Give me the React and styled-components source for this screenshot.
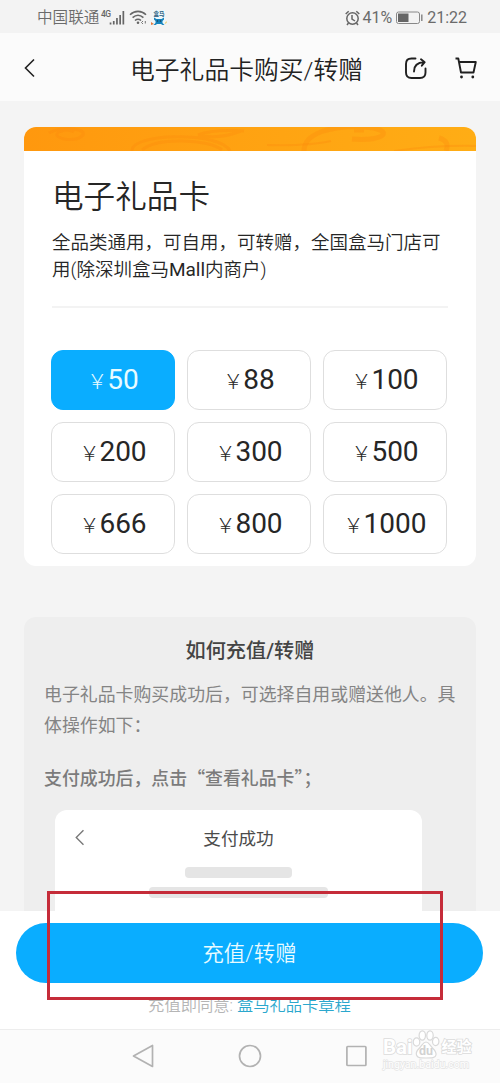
import React from 'react';
import styled, { createGlobalStyle } from 'styled-components';

const Global = createGlobalStyle`
  * { box-sizing: border-box; }
  body { margin: 0; background: #f4f4f4; font-family: Roboto, "Noto Sans CJK SC", sans-serif; color: #262626; }
  h1, h2, h3, p { margin: 0; font-weight: 350; }
  button { font: inherit; color: inherit; }
  svg { display: block; flex: none; }
`;

const Screen = styled.div`
  position: relative;
  width: 500px;
  height: 1083px;
  display: flex;
  flex-direction: column;
  overflow: hidden;
  background: #f4f4f4;
`;

const StatusBar = styled.div`
  height: 33px;
  flex: none;
  display: flex;
  justify-content: space-between;
  align-items: center;
  padding: 2px 33px 0 37px;
  color: #6b6b6b;
  font-size: 16px;
  background: #f3f3f3;
`;

const StatusGroup = styled.div`
  display: flex;
  align-items: center;
  gap: ${(p) => p.$gap}px;
`;

const Carrier = styled.span`
  height: 24px;
  font-size: 15.6px;
  line-height: 24px;
  font-weight: 350;
  white-space: nowrap;
`;

const Header = styled.header`
  height: 68px;
  flex: none;
  display: flex;
  align-items: center;
  padding: 2px 23px 0 23px;
  background: #fbfbfb;
`;

const HeaderTitle = styled.h1`
  flex: 1;
  padding: 5px 0 0 92px;
  font-size: 24.8px;
  line-height: 36px;
  color: #222;
  white-space: nowrap;
`;

const HeaderActions = styled.div`
  display: flex;
  gap: 28px;
`;

const Content = styled.main`
  flex: 1;
  min-height: 0;
  overflow: hidden;
  padding: 26px 24px 0;
`;

const Card = styled.section`
  height: 439px;
  border-radius: 12px;
  overflow: hidden;
  background: #fff;
`;

const Banner = styled.div`
  height: 24px;
  overflow: hidden;
  background: linear-gradient(90deg, #ff980e, #ffad15);
`;

const CardBody = styled.div`
  padding: 24px 28px 0;
`;

const CardTitle = styled.h2`
  font-size: 31.6px;
  line-height: 46px;
  white-space: nowrap;
`;

const Description = styled.p`
  margin-top: 9px;
  padding-bottom: 23px;
  border-bottom: 2px solid #f3f3f3;
  font-size: 18.5px;
  line-height: 26.5px;
  white-space: nowrap;
`;

const Latin = styled.span`
  font-size: 19px;
  font-weight: 400;
`;

const Amounts = styled.div`
  margin: 42px 0 0 -1px;
  display: grid;
  grid-template-columns: repeat(3, 124px);
  column-gap: 12px;
  row-gap: 12px;
`;

const Amount = styled.button`
  height: 60px;
  padding: 0;
  display: flex;
  justify-content: center;
  align-items: baseline;
  border: 1px solid ${(p) => (p.$active ? '#0aadff' : '#dedede')};
  border-radius: 12px;
  background: ${(p) => (p.$active ? '#0aadff' : '#fff')};
  color: ${(p) => (p.$active ? '#e9fbff' : '#262626')};
  font-size: 28px;
  line-height: 58px;
`;

const Yen = styled.span`
  font-family: "Noto Sans CJK SC", sans-serif;
  font-size: 20px;
  font-weight: 300;
`;

const Guide = styled.section`
  margin-top: 51px;
  height: 420px;
  padding: 17px 20px 0;
  border-radius: 12px;
  background: #eee;
`;

const GuideTitle = styled.h2`
  font-size: 20.2px;
  line-height: 34px;
  font-weight: 500;
  text-align: center;
  color: #444;
`;

const GuideText = styled.p`
  margin-top: ${(p) => p.$top}px;
  font-family: "Noto Sans CJK SC", sans-serif;
  font-size: 17.9px;
  line-height: 31px;
  font-weight: ${(p) => (p.$strong ? 500 : 400)};
  color: ${(p) => (p.$strong ? '#7b7b7b' : '#848484')};
  white-space: nowrap;
`;

const Preview = styled.div`
  margin: 17px 0 0 11px;
  width: 367px;
  height: 160px;
  border-radius: 12px;
  background: #fff;
`;

const PreviewHeader = styled.div`
  height: 57px;
  display: grid;
  grid-template-columns: 20px 1fr 20px;
  align-items: center;
  padding: 0 19px 2px;
  font-size: 17.6px;
  color: #4b4b4b;
  text-align: center;
`;

const Placeholder = styled.div`
  width: ${(p) => p.$width}px;
  height: 11px;
  margin: 0 auto 9px;
  border-radius: 4px;
  background: #e5e5e5;
`;

const Footer = styled.footer`
  height: 118px;
  flex: none;
  padding: 12px 17px 0 16px;
  background: #fff;
  text-align: center;
`;

const PayButton = styled.button`
  width: 100%;
  height: 60px;
  display: block;
  padding: 0 0 3px;
  border: 0;
  border-radius: 30px;
  background: #0aadff;
  color: #e9fbff;
  font-size: 21.4px;
  font-weight: 350;
`;

const Terms = styled.p`
  margin-top: 11px;
  font-size: 16.3px;
  line-height: 24px;
  color: #b5b5b5;
  white-space: nowrap;
`;

const TermsLink = styled.span`
  color: #2ba7cd;
`;

const SystemNav = styled.nav`
  position: relative;
  height: 54px;
  flex: none;
  display: flex;
  align-items: center;
  padding: 0 0 2px 132px;
  gap: 84px;
  border-top: 1px solid #ededed;
  background: #fbfbfb;
`;

const Highlight = styled.div`
  position: absolute;
  left: 47px;
  top: 891px;
  width: 396px;
  height: 109px;
  border: 3px solid #c52c39;
`;

const Watermark = styled.div`
  position: absolute;
  left: 383px;
  top: 0;
  width: 90px;
  color: #fff;
`;

const Brand = styled.div`
  height: 29px;
  display: flex;
  align-items: flex-end;
  font-size: 20.5px;
  font-weight: 700;
  line-height: 23px;
`;

const BrandName = styled.span`
  margin-left: ${(p) => p.$gap || 0}px;
  font-size: ${(p) => p.$size || 20.5}px;
  -webkit-text-stroke: 1.6px #dcdcdc;
  paint-order: stroke fill;
`;

const Site = styled.div`
  font-size: 10.6px;
  line-height: 12px;
  white-space: nowrap;
  -webkit-text-stroke: 1.3px #e4e4e4;
  paint-order: stroke fill;
`;

const Paw = () => (
  <svg width="28" height="29" viewBox="0 0 28 29" fill="#fff" stroke="#d9d9d9" strokeWidth="1.200">
    <ellipse cx="4.500" cy="12" rx="3.300" ry="4.200" />
    <ellipse cx="10.300" cy="5.500" rx="3.200" ry="4.700" />
    <ellipse cx="18" cy="5.500" rx="3.200" ry="4.700" />
    <ellipse cx="23.700" cy="11.500" rx="3.200" ry="4.200" />
    <path d="M14 12c-3 0-4 3.500-6.500 6-2.500 2.400-4 4-3 7s3.500 3 9.500 3 9.500 0 10-3-1-4.600-3.500-7C18 15.500 17 12 14 12Z" />
    <text x="14" y="25" textAnchor="middle" fontFamily="Roboto" fontWeight="700" fontSize="12.500" stroke="none" fill="#d2d2d2">du</text>
  </svg>
);

const Signal = () => (
  <svg width="27" height="18" viewBox="0 0 27 18" fill="#666">
    <text x="2" y="8" fontFamily="Roboto" fontWeight="500" fontSize="8.500" letterSpacing="-.5">4G</text>
    <path d="M10.700 13.500h1.700v2h-1.700zM13.900 12h1.700v3.500h-1.700zM17.100 9h1.700v6.500h-1.700zM20.300 6h1.700v9.500h-1.700zM23.500 2h1.700v13.500h-1.700z" />
  </svg>
);

const Wifi = () => (
  <svg width="18" height="16" viewBox="0 0 18 16" fill="none" stroke="#666" strokeWidth="1.600">
    <path d="M1 4.800C5.700.2 12.300.2 17 4.800M3.600 7.700c3.300-3 7.500-3 10.800 0M6 10.500c2-1.700 4-1.700 6 0" />
    <circle cx="9" cy="12.800" r="1.300" fill="#666" stroke="none" />
    <path d="m14 11-1.500 1.500 1.500 1.500M16.300 11v2.500" strokeWidth=".9" />
  </svg>
);

const Mascot = () => (
  <svg width="18" height="18" viewBox="0 0 18 18">
    <path d="M2 1h13v15H2z" fill="#edf7fa" />
    <text x="9" y="7" textAnchor="middle" fontFamily="Noto Sans CJK SC" fontWeight="700" fontSize="5.500" fill="#225b7d">盒马</text>
    <path d="M4 8.500 6.500 10h5L14 8.500v2l-1.500 1.500v2l2 2h-2L11 15H7l-1.500 1h-2l2-2v-2L4 10.500z" fill="#1583bd" />
    <circle cx="7.500" cy="12" r=".8" fill="#173c53" />
    <circle cx="10.500" cy="12" r=".8" fill="#173c53" />
    <path d="m1 13 3 2-3 1z" fill="#e4793e" />
    <path d="m14.500 15 2-3v2z" fill="#e8c447" />
  </svg>
);

const Alarm = () => (
  <svg width="15" height="16" viewBox="0 0 15 16" fill="none" stroke="#666" strokeWidth="1.500">
    <circle cx="7.500" cy="8.500" r="5.700" />
    <path d="M7 5v4l3 2M.7 4l3-2.800M14.300 4l-3-2.800M3.500 13l-1.500 2M11.500 13l1.500 2" />
  </svg>
);

const Battery = () => (
  <svg width="27" height="14" viewBox="0 0 27 14" fill="none" stroke="#888">
    <rect x=".5" y="1" width="23" height="11.500" rx="2" />
    <path d="M2 2.500h10.500v8.500H2z" fill="#666" stroke="none" />
    <path d="M25.800 3.500v6.500" strokeWidth="1.500" />
  </svg>
);

const Back = ({ width = 15, height = 20, color = '#222', stroke = 1.6 }) => (
  <svg width={width} height={height} viewBox="0 0 15 20" fill="none" stroke={color} strokeWidth={stroke}>
    <path d="m11 1.500-8.500 8.500 8.500 8.500" />
  </svg>
);

const Share = () => (
  <svg width="22" height="22" viewBox="0 0 22 22" fill="none" stroke="#202020" strokeWidth="1.900" strokeLinecap="round" strokeLinejoin="round">
    <path d="M10.500 1.500H6.500Q1 1.500 1 7v8.500Q1 21 6.500 21h8.500Q20.500 21 20.500 15.500V11.500" />
    <path d="M9 14.500C9 9 12 5.500 19 5.300M16 2.300 19.700 5.200l-2.900 3.500" />
  </svg>
);

const Cart = () => (
  <svg width="22" height="22" viewBox="0 0 22 22" fill="none" stroke="#202020" strokeWidth="1.900" strokeLinejoin="round">
    <path d="M.5 1.500h2.800L6 15.500h12.500L20.800 5H4" />
    <circle cx="6.500" cy="20" r="1.400" fill="#202020" stroke="none" />
    <circle cx="17.800" cy="20" r="1.400" fill="#202020" stroke="none" />
  </svg>
);

const BannerArt = () => (
  <svg width="452" height="24" viewBox="0 0 452 24" fill="none" stroke="#fb8a0b" strokeOpacity=".32" strokeWidth="3">
    <path d="M25 6q9-5 24-4 14 2 9 7-6 5-18 3-11-3-5-7 8-4 15 0" />
    <path d="M108 24c-2-18 88-20 98 0M118 23c15-13 67-11 80 0M174 8q15-6 46-4M174 8q20 5 43-4" />
    <path d="M243 18q42 1 64-4" strokeWidth="2" />
    <path d="M280 24C280 6 308-2 340 0c32 2 22 15-12 12M330 3h10M415 11q11 3 7 13" strokeWidth="5" />
    <path d="M370 24q43-6 82-5" strokeWidth="2" />
  </svg>
);

const amounts = [50, 88, 100, 200, 300, 500, 666, 800, 1000];

export default function App() {
  return (
    <>
      <Global />
      <Screen>
        <StatusBar>
          <StatusGroup $gap={3}>
            <StatusGroup $gap={0}>
              <Carrier>中国联通</Carrier>
              <Signal />
            </StatusGroup>
            <Wifi />
            <Mascot />
          </StatusGroup>
          <StatusGroup $gap={4}>
            <StatusGroup $gap={2}>
              <Alarm />
              <span>41%</span>
            </StatusGroup>
            <Battery />
            <span>21:22</span>
          </StatusGroup>
        </StatusBar>
        <Header>
          <Back />
          <HeaderTitle>电子礼品卡购买/转赠</HeaderTitle>
          <HeaderActions>
            <Share />
            <Cart />
          </HeaderActions>
        </Header>
        <Content>
          <Card>
            <Banner><BannerArt /></Banner>
            <CardBody>
              <CardTitle>电子礼品卡</CardTitle>
              <Description>
                全品类通用，可自用，可转赠，全国盒马门店可<br />用(除深圳盒马<Latin>Mall</Latin>内商户)
              </Description>
              <Amounts>
                {amounts.map((value) => (
                  <Amount key={value} $active={value === 50}>
                    <Yen>￥</Yen>
                    <span>{value}</span>
                  </Amount>
                ))}
              </Amounts>
            </CardBody>
          </Card>
          <Guide>
            <GuideTitle>如何充值/转赠</GuideTitle>
            <GuideText $top={10}>
              电子礼品卡购买成功后，可选择自用或赠送他人。具<br />体操作如下：
            </GuideText>
            <GuideText $top={22} $strong>支付成功后，点击“查看礼品卡”；</GuideText>
            <Preview>
              <PreviewHeader>
                <Back width={13} height={17} color="#777" />
                <span>支付成功</span>
              </PreviewHeader>
              <Placeholder $width={107} />
              <Placeholder $width={179} />
            </Preview>
          </Guide>
        </Content>
        <Footer>
          <PayButton>充值/转赠</PayButton>
          <Terms>充值即同意: <TermsLink>盒马礼品卡章程</TermsLink></Terms>
        </Footer>
        <SystemNav>
          <svg width="22" height="24" viewBox="0 0 22 24" fill="none" stroke="#b2b2b2" strokeWidth="1.700" strokeLinejoin="round">
            <path d="M1.500 12 20.500 1.500v21z" />
          </svg>
          <svg width="24" height="24" viewBox="0 0 24 24" fill="none" stroke="#b2b2b2" strokeWidth="1.700">
            <circle cx="12" cy="12" r="10.500" />
          </svg>
          <svg width="22" height="22" viewBox="0 0 22 22" fill="none" stroke="#b2b2b2" strokeWidth="1.700">
            <rect x=".9" y="1.500" width="19" height="19" rx=".8" />
          </svg>
          <Watermark>
            <Brand>
              <BrandName>Bai</BrandName>
              <Paw />
              <BrandName $size={15} $gap={1}>经验</BrandName>
            </Brand>
            <Site>jingyan.baidu.com</Site>
          </Watermark>
        </SystemNav>
        <Highlight />
      </Screen>
    </>
  );
}
